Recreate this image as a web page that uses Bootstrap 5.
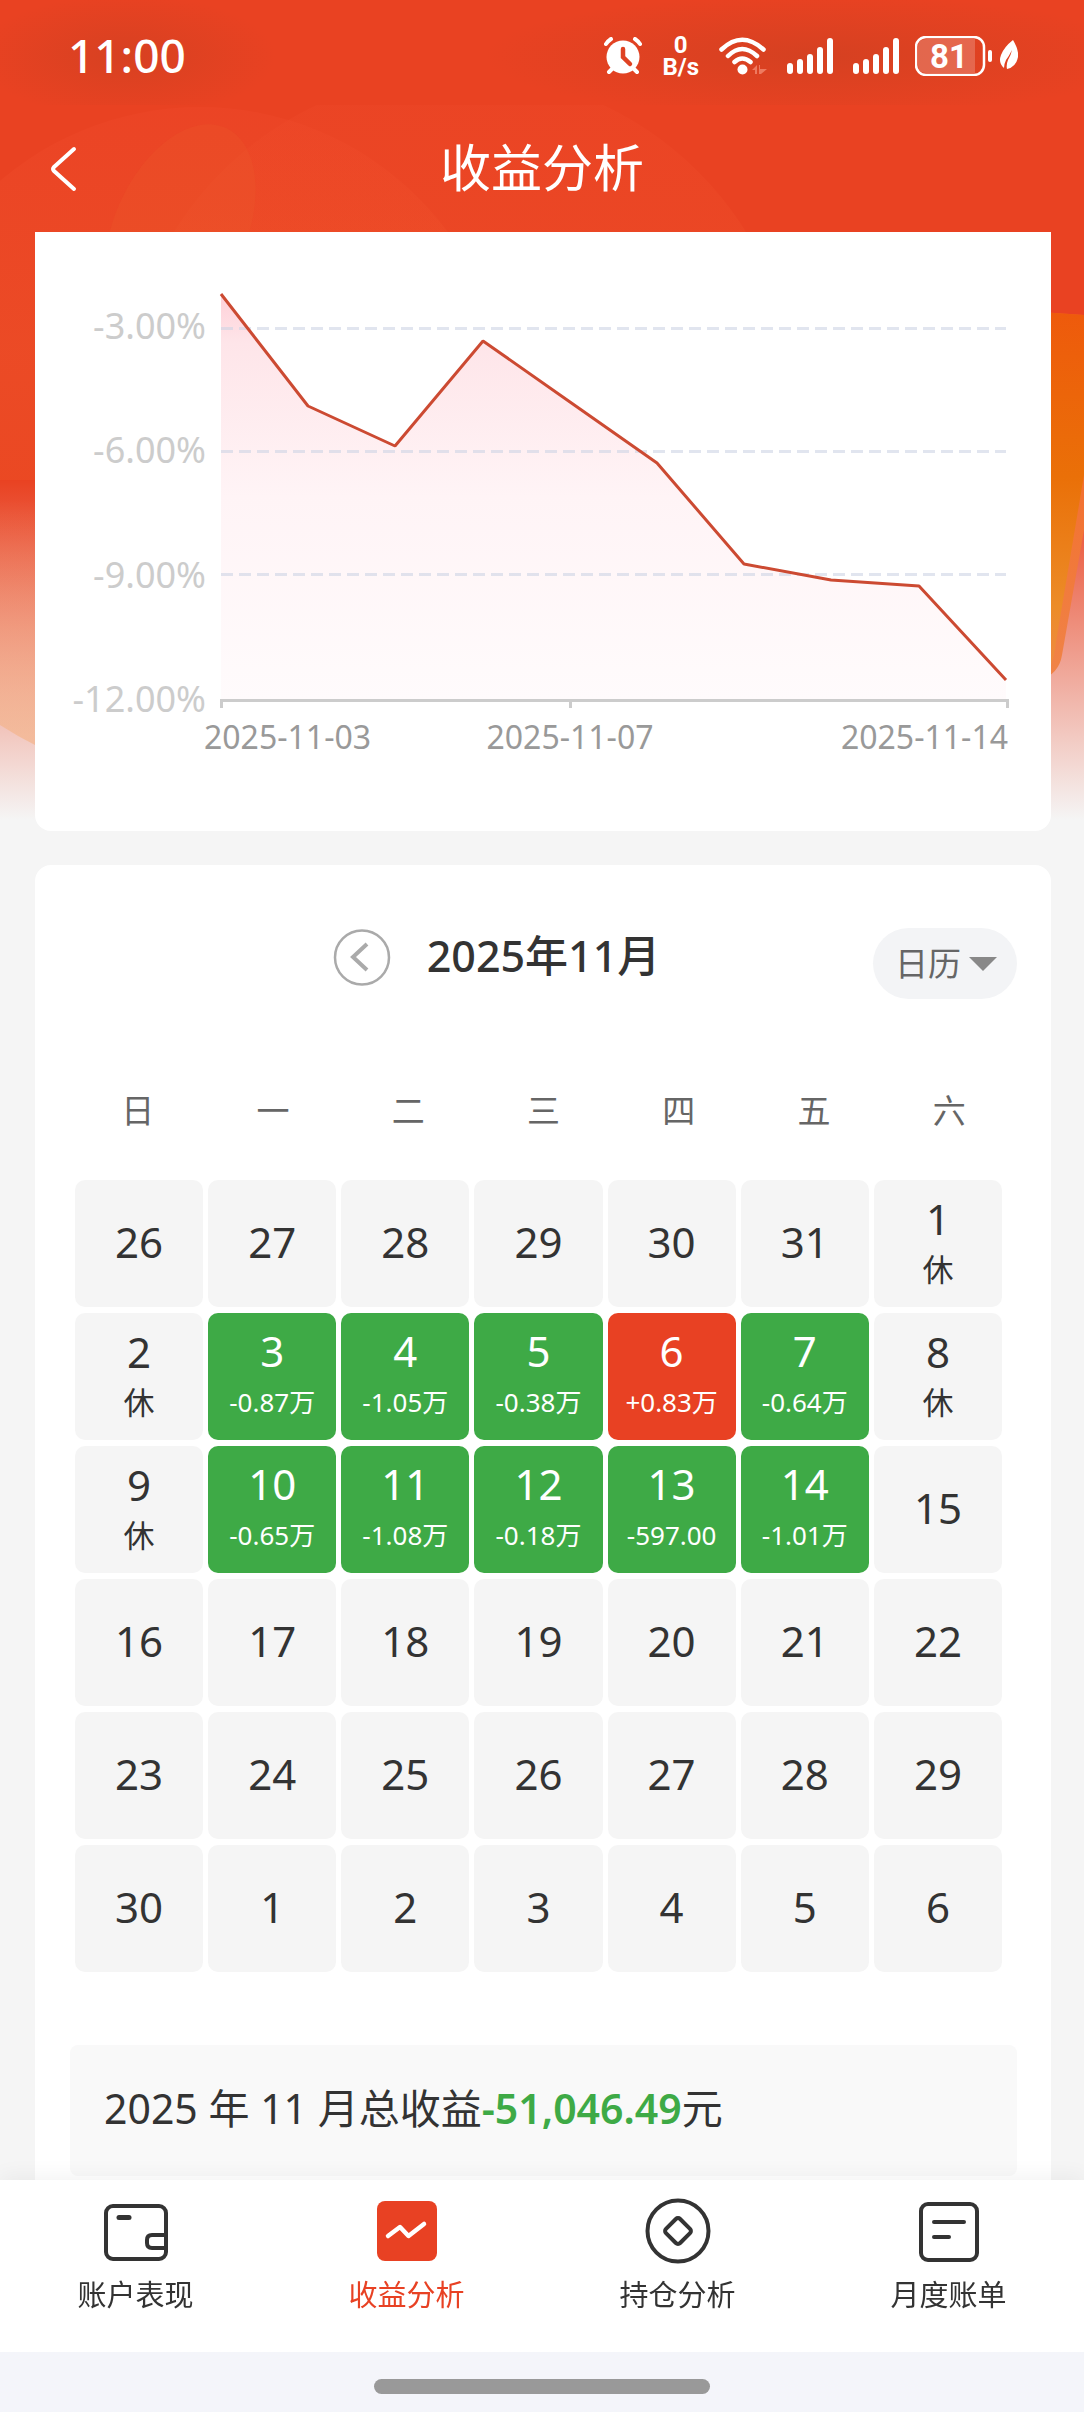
<!DOCTYPE html>
<html lang="zh-CN">
<head>
<meta charset="utf-8">
<meta name="viewport" content="width=device-width, initial-scale=1">
<title>收益分析</title>
<link href="https://cdn.jsdelivr.net/npm/bootstrap@5.3.0/dist/css/bootstrap.min.css" rel="stylesheet">
<style>
:root{--brand:#e84123;--fall:#3eaa46;--ink:#333;--page:#f5f5f5}
body{background:var(--page);color:var(--ink);font-family:"Noto Sans","Noto Sans CJK SC",sans-serif;min-height:100vh}
.backdrop{position:absolute;top:0;left:0;width:100%;height:820px;z-index:-1}
.status-bar{height:105px;padding:7px 66px 0 68px;color:#fff;background:radial-gradient(ellipse 150px 62px at 126px 56px,rgba(150,60,30,.22),transparent),radial-gradient(ellipse 330px 62px at calc(100% - 270px) 56px,rgba(150,60,30,.24),transparent)}
.clock{font-size:46px;font-weight:500;line-height:56px;padding-bottom:2px}
.status-icons{gap:20px}
.net-speed{font-family:Roboto,sans-serif;font-size:24px;font-weight:700;line-height:22px;text-align:center}
.title-bar{height:127px;padding:0 50px;color:#fff}
.title-bar h1{font-size:51px;font-weight:400;line-height:60px;padding-bottom:4px}
.side-slot{flex:1 1 0}
.sheet{margin:0 33px 0 35px;background:#fff}
.chart-sheet{border-radius:0 0 16px 16px}
.month-sheet{margin-top:34px;padding:63px 34px 35px 35px;border-radius:16px 16px 0 0}
.prev-btn{width:58px;height:58px;margin-right:36px}
.month-name{font-size:43px;font-weight:500;line-height:56px}
.view-pill{height:71px;padding:0 20px 0 22px;border-radius:36px;background:#f3f4f6;color:#666;gap:8px}
.view-pill select{appearance:none;border:0;background:none;color:inherit;font-size:33px;line-height:44px;padding:0;width:66px}
.weekdays{margin-top:92px;font-size:33px;line-height:40px;color:#666}
.weekdays span{flex:1 1 0;text-align:center}
.days{display:grid;grid-template-columns:repeat(7,1fr);gap:6px 5px;margin:49px 15px 0 5px}
.day{height:127px;border:0;border-radius:10px;background:var(--page);color:var(--ink);padding:0 0 5px;font-size:42px;line-height:51px}
.day span{display:block;font-size:31px;line-height:51px}
.day.noted{padding:1px 0 0}
.day.down,.day.up{color:#fff}
.day.down{background:var(--fall)}
.day.up{background:var(--brand)}
.day.down span,.day.up span{font-size:26px;line-height:53px}
.total-box{margin-top:73px;padding:0 34px 5px;border-radius:8px;background:#f9f9f9;font-size:41px;line-height:126px}
.total-box strong{font-weight:600;color:var(--fall)}
main{padding-bottom:201px}
.tab-bar{background:#fff;box-shadow:0 -4px 20px rgba(0,0,0,.05)}
.tabs{height:172px;padding-top:17px}
.tabs a{flex:1 1 0;color:var(--ink);text-decoration:none;font-size:29px;line-height:40px;gap:10px}
.tabs a.active{color:var(--brand)}
.home-area{height:60px;background:#f4f5fa;padding-top:27px}
.home-line{width:31%;height:15px;border-radius:8px;background:#999}
svg{display:block}
</style>
</head>
<body class="position-relative">
<svg class="backdrop" viewBox="0 0 1084 820" preserveAspectRatio="none" aria-hidden="true">
  <defs>
    <linearGradient id="fade" x1="0" y1="0" x2="0" y2="1"><stop offset="0" stop-color="#f5f5f5" stop-opacity="0"/><stop offset=".3" stop-color="#f5f5f5" stop-opacity=".3"/><stop offset=".7" stop-color="#f5f5f5" stop-opacity=".7"/><stop offset="1" stop-color="#f5f5f5"/></linearGradient>
    <linearGradient id="orange" x1="0" y1="0" x2="0" y2="1"><stop offset="0" stop-color="#ee5a0c"/><stop offset=".45" stop-color="#ea7008"/><stop offset=".8" stop-color="#ec8c28"/><stop offset="1" stop-color="#f08a48"/></linearGradient>
    <linearGradient id="edge" x1="0" y1="0" x2="0" y2="1"><stop offset="0" stop-color="#f4601c"/><stop offset="1" stop-color="#f08448"/></linearGradient>
    <linearGradient id="peach" x1="0" y1="0" x2="0" y2="1"><stop offset="0" stop-color="#f4b080" stop-opacity="0"/><stop offset="1" stop-color="#f4b080" stop-opacity=".6"/></linearGradient>
    <linearGradient id="glow" x1="0" y1="0" x2="0" y2="1"><stop offset="0" stop-color="#f04a2c" stop-opacity=".6"/><stop offset=".4" stop-color="#f05a2c" stop-opacity=".7"/><stop offset="1" stop-color="#ea5018" stop-opacity=".5"/></linearGradient>
    <clipPath id="below"><rect y="105" width="1084" height="375"/></clipPath>
  </defs>
  <rect width="1084" height="820" fill="#e94222"/>
  <g clip-path="url(#below)">
    <circle cx="460" cy="410" r="337" fill="url(#glow)" opacity=".4"/>
    <circle cx="200" cy="415" r="308" fill="url(#glow)" opacity=".5"/>
    <ellipse cx="180" cy="230" rx="66" ry="112" transform="rotate(24 180 230)" fill="#ea5a2a" opacity=".25"/>
  </g>
  <rect y="480" width="1084" height="340" fill="url(#fade)"/>
  <path d="M0 500H500V745H35Q17 736 0 725Z" fill="url(#peach)"/>
  <path d="M1040 312L1084 315V530L1062 655Q1059 674 1040 680Z" fill="url(#edge)"/>
  <path d="M1040 312L1084 315V475L1056 642Q1053 672 1040 680Z" fill="url(#orange)"/>
</svg>

<header>
  <div class="status-bar d-flex justify-content-between align-items-center">
    <div class="clock">11:00</div>
    <div class="status-icons d-flex align-items-center">
      <svg width="38" height="38" viewBox="0 0 38 38" fill="none" stroke="#fff" stroke-linecap="round"><circle cx="19" cy="20" r="16.500" fill="#fff" stroke="none"/><path d="M2 7Q4 4 7 2M36 7Q34 4 31 2M8 32L5 35M30 32L33 35" stroke-width="4"/><path d="M19 12V20L26 27" stroke="#df4223" stroke-width="4.500"/></svg>
      <div class="net-speed"><div>0</div><div>B/s</div></div>
      <svg width="48" height="38" viewBox="0 0 48 38" fill="none" stroke="#fff" stroke-width="4.500" stroke-linecap="round"><path d="M2.500 12.500Q23 -7 44.500 12.500M9 19Q23 5 38 19M15.500 25Q23 18 31.500 25"/><circle cx="23.500" cy="32.500" r="5" fill="#fff" stroke="none"/><path d="M33 33L38 28V37H36V33ZM40 28H41V32H48L42 37H40Z" fill="#ee7a60" stroke="none"/></svg>
      <svg width="46" height="38" viewBox="0 0 46 38" fill="#fff"><rect y="26" width="6" height="11" rx="3"/><rect x="10" y="22" width="6" height="15" rx="3"/><rect x="20" y="17" width="6" height="20" rx="3"/><rect x="30" y="10" width="6" height="27" rx="3"/><rect x="40" y="1" width="6" height="36" rx="3"/></svg>
      <div class="d-flex align-items-center gap-3">
        <svg width="46" height="38" viewBox="0 0 46 38" fill="#fff"><rect y="26" width="6" height="11" rx="3"/><rect x="10" y="22" width="6" height="15" rx="3"/><rect x="20" y="17" width="6" height="20" rx="3"/><rect x="30" y="10" width="6" height="27" rx="3"/><rect x="40" y="1" width="6" height="36" rx="3"/></svg>
        <svg width="103" height="40" viewBox="0 0 103 40"><path d="M11 3H60V37H11Q3 37 3 29V11Q3 3 11 3Z" fill="#fff" opacity=".2"/><rect x="1" y="1" width="68" height="38" rx="10" fill="none" stroke="#fff" stroke-width="2.500"/><rect x="73" y="14" width="4" height="12" rx="2" fill="#fff"/><text x="34" y="32" text-anchor="middle" font-family="Roboto, sans-serif" font-size="33" font-weight="700" fill="#fff">81</text><path d="M98 4Q104 14 103 21Q101 31 92 33Q91 29 93 24Q96 19 97 14Q94 20 91 24Q89 28 89 32Q83 27 86 19Q89 11 98 4Z" fill="#fff"/></svg>
      </div>
    </div>
  </div>
  <div class="title-bar d-flex align-items-center">
    <div class="side-slot"><a href="#" aria-label="返回" class="d-flex"><svg width="28" height="46" viewBox="0 0 28 46" fill="none" stroke="#fff" stroke-width="4" stroke-linecap="round" stroke-linejoin="round"><path d="M24 3L4 21Q2 23 4 25L24 43"/></svg></a></div>
    <h1 class="m-0">收益分析</h1>
    <div class="side-slot"></div>
  </div>
</header>

<main>
  <section class="sheet chart-sheet">
    <svg class="w-100" viewBox="0 0 1016 599" role="img" aria-label="收益率走势">
      <defs><linearGradient id="area" x1="0" y1="0" x2="0" y2="1"><stop offset="0" stop-color="#ffd0d8"/><stop offset=".12" stop-color="#fee5e9"/><stop offset=".5" stop-color="#fff4f6"/><stop offset="1" stop-color="#fffbfc"/></linearGradient></defs>
      <path d="M186 62L273 174L360 214L448 109L535 170L622 231L709 332L796 348L884 354L971 448V468H186Z" fill="url(#area)"/>
      <path d="M186 96.500H971M186 219.500H971M186 342.500H971" stroke="#cdd3e4" stroke-opacity=".6" stroke-width="3" stroke-dasharray="12 6"/>
      <path d="M186 62L273 174L360 214L448 109L535 170L622 231L709 332L796 348L884 354L971 448" fill="none" stroke="#cc4a32" stroke-width="3" stroke-linejoin="bevel"/>
      <path d="M186.500 476V468.500H972.500V476M535.500 468V476" fill="none" stroke="#ccc" stroke-width="3"/>
      <g font-size="36" fill="#ccc" text-anchor="end"><text x="171" y="107">-3.00%</text><text x="171" y="231">-6.00%</text><text x="171" y="356">-9.00%</text><text x="171" y="480">-12.00%</text></g>
      <g font-size="32" fill="#999"><text x="169" y="517">2025-11-03</text><text x="535" y="517" text-anchor="middle">2025-11-07</text><text x="973" y="517" text-anchor="end">2025-11-14</text></g>
    </svg>
  </section>

  <section class="sheet month-sheet">
    <div class="d-flex align-items-start">
      <div class="side-slot d-flex justify-content-end">
        <button type="button" class="prev-btn btn p-0 border-0" aria-label="上个月"><svg width="58" height="58" viewBox="0 0 58 58" fill="none" stroke="#aaa"><circle cx="29" cy="29.500" r="27" stroke-width="2.500"/><path d="M34 16L20 29L34 42" stroke-width="4"/></svg></button>
      </div>
      <div class="month-name">2025年11月</div>
      <div class="side-slot d-flex justify-content-end">
        <label class="view-pill d-flex align-items-center"><select aria-label="视图"><option>日历</option></select><svg width="28" height="14" viewBox="0 0 28 14" fill="#888"><path d="M0 0H28L14 14Z"/></svg></label>
      </div>
    </div>
    <div class="weekdays d-flex"><span>日</span><span>一</span><span>二</span><span>三</span><span>四</span><span>五</span><span>六</span></div>
    <div class="days">
      <button class="day">26</button><button class="day">27</button><button class="day">28</button><button class="day">29</button><button class="day">30</button><button class="day">31</button><button class="day noted">1<span>休</span></button>
      <button class="day noted">2<span>休</span></button><button class="day noted down">3<span>-0.87万</span></button><button class="day noted down">4<span>-1.05万</span></button><button class="day noted down">5<span>-0.38万</span></button><button class="day noted up">6<span>+0.83万</span></button><button class="day noted down">7<span>-0.64万</span></button><button class="day noted">8<span>休</span></button>
      <button class="day noted">9<span>休</span></button><button class="day noted down">10<span>-0.65万</span></button><button class="day noted down">11<span>-1.08万</span></button><button class="day noted down">12<span>-0.18万</span></button><button class="day noted down">13<span>-597.00</span></button><button class="day noted down">14<span>-1.01万</span></button><button class="day">15</button>
      <button class="day">16</button><button class="day">17</button><button class="day">18</button><button class="day">19</button><button class="day">20</button><button class="day">21</button><button class="day">22</button>
      <button class="day">23</button><button class="day">24</button><button class="day">25</button><button class="day">26</button><button class="day">27</button><button class="day">28</button><button class="day">29</button>
      <button class="day">30</button><button class="day">1</button><button class="day">2</button><button class="day">3</button><button class="day">4</button><button class="day">5</button><button class="day">6</button>
    </div>
    <div class="total-box">2025 年 11 月总收益<strong>-51,046.49</strong>元</div>
  </section>
</main>

<footer class="tab-bar fixed-bottom">
  <nav class="tabs d-flex">
    <a href="#" class="d-flex flex-column align-items-center"><svg width="68" height="68" viewBox="0 0 68 68" fill="none" stroke="#333" stroke-width="4"><rect x="4" y="9" width="60" height="53" rx="7"/><path d="M64 38H50Q45 38 45 43V46Q45 51 50 51H64"/><path d="M17 20.500H27" stroke-width="5" stroke-linecap="round"/></svg>账户表现</a>
    <a href="#" class="active d-flex flex-column align-items-center" aria-current="page"><svg width="68" height="68" viewBox="0 0 68 68" fill="none"><rect x="4" y="4" width="60" height="60" rx="8" fill="#e84123"/><path d="M15 39L27 30L35.500 39L51 27" stroke="#fff" stroke-width="4.500" stroke-linecap="round" stroke-linejoin="round"/></svg>收益分析</a>
    <a href="#" class="d-flex flex-column align-items-center"><svg width="68" height="68" viewBox="0 0 68 68" fill="none" stroke="#333" stroke-width="4"><circle cx="34" cy="34" r="30.500"/><rect x="24" y="24" width="20" height="20" rx="3" transform="rotate(45 34 34)"/></svg>持仓分析</a>
    <a href="#" class="d-flex flex-column align-items-center"><svg width="68" height="68" viewBox="0 0 68 68" fill="none" stroke="#333" stroke-width="4" stroke-linecap="round"><rect x="6" y="7" width="56" height="56" rx="7"/><path d="M19 25H49M19 40H34"/></svg>月度账单</a>
  </nav>
  <div class="home-area"><div class="home-line mx-auto"></div></div>
</footer>
<script src="https://cdn.jsdelivr.net/npm/bootstrap@5.3.0/dist/js/bootstrap.bundle.min.js"></script>
</body>
</html>
